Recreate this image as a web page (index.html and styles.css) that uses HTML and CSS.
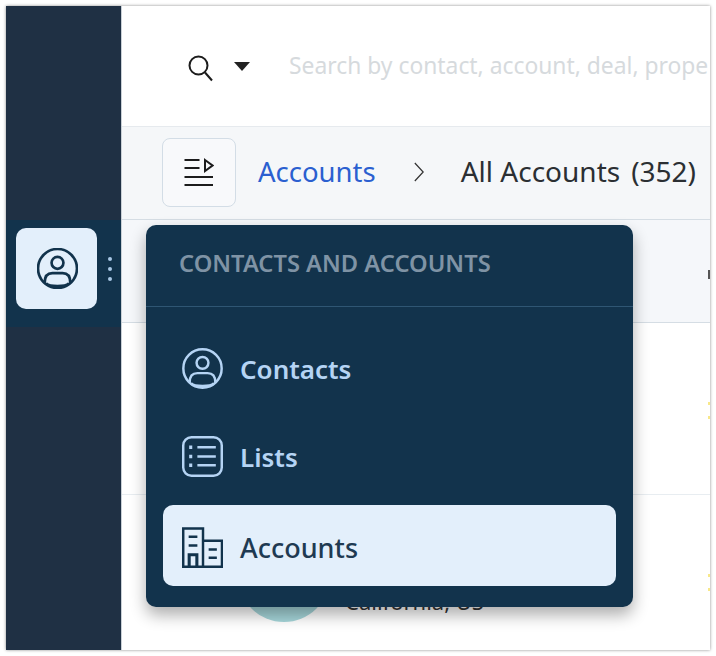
FILE: index.html
```html
<!DOCTYPE html>
<html lang="en">
<head>
  <meta charset="UTF-8">
  <title>All Accounts</title>
  <link rel="stylesheet" href="styles.css">
</head>
<body>
  <div class="frame">
    <!-- Left nav -->
    <aside class="sidebar">
      <div class="nav-active">
        <div class="nav-tile">
          <svg class="nav-icon" viewBox="0 0 40 40" fill="none" stroke="#12334c" stroke-width="2.6">
            <circle cx="20" cy="20" r="19"/>
            <circle cx="20" cy="14.5" r="5.8"/>
            <path d="M7.5 34 C7.5 27 11 24.5 15 24.5 H25 C29 24.5 32.5 27 32.5 34"/>
            <path d="M9 34.5 C12 38 28 38 31 34.5"/>
          </svg>
        </div>
        <div class="nav-dots"><i></i><i></i><i></i></div>
      </div>
    </aside>

    <main class="main">
      <!-- Search -->
      <div class="topbar">
        <svg class="search-icon" viewBox="0 0 26 27" fill="none" stroke="#1c1c1c" stroke-width="2">
          <circle cx="10.5" cy="10.5" r="9"/>
          <path d="M17 17.5 L24 25.5"/>
        </svg>
        <span class="caret"></span>
        <span class="search-text">Search by contact, account, deal, prope</span>
      </div>

      <!-- Breadcrumb -->
      <div class="crumbs">
        <button class="list-toggle">
          <svg viewBox="0 0 30 30" width="30" height="30" fill="none" stroke="#1c1c1c" stroke-width="2">
            <path d="M0.5 3 H15.5 M0.5 11 H15.5 M0.5 20 H29 M0.5 28 H29"/>
            <path d="M21 3 L28.5 8.5 L21 14 Z"/>
          </svg>
        </button>
        <a class="crumb-link">Accounts</a>
        <svg class="crumb-sep" viewBox="0 0 12 22" preserveAspectRatio="none" fill="none" stroke="#333" stroke-width="1.5">
          <path d="M1 1 L11 11 L1 21"/>
        </svg>
        <span class="crumb-current">All Accounts</span>
        <span class="crumb-count">(352)</span>
      </div>

      <!-- Table behind the menu -->
      <div class="table-head"><span class="head-cell"></span></div>
      <div class="table-row row-first"><span class="rating"></span></div>
      <div class="table-row row-second">
        <span class="avatar"></span>
        <span class="place">California, US</span>
        <span class="rating"></span>
      </div>
    </main>

    <!-- Section menu -->
    <div class="menu">
      <div class="menu-title">CONTACTS AND ACCOUNTS</div>
      <ul class="menu-list">
        <li class="menu-item">
          <svg class="menu-icon" viewBox="0 0 40 40" fill="none" stroke="currentColor" stroke-width="2.4">
            <circle cx="20" cy="20" r="18.7"/>
            <circle cx="20" cy="14.5" r="5.8"/>
            <path d="M7.5 33.5 C7.5 27 11 24.5 15 24.5 H25 C29 24.5 32.5 27 32.5 33.5"/>
            <path d="M9 34.5 C12 38 28 38 31 34.5"/>
          </svg>
          Contacts
        </li>
        <li class="menu-item">
          <svg class="menu-icon" viewBox="0 0 40 40" fill="none" stroke="currentColor" stroke-width="2.4">
            <rect x="1.2" y="1.2" width="37.6" height="37.6" rx="8"/>
            <path d="M15 11 H33 M15 20 H33 M15 28.5 H33"/>
            <path d="M7 11 H10 M7 20 H10 M7 28.5 H10" stroke-width="3.4"/>
          </svg>
          Lists
        </li>
        <li class="menu-item is-selected">
          <svg class="menu-icon" viewBox="0 0 40 40" fill="none" stroke="currentColor" stroke-width="2.4">
            <path d="M1.2 39 V1.5 H20.5 V39"/>
            <path d="M20.5 13.5 H39 V39"/>
            <path d="M0 39 H40" stroke-width="3"/>
            <path d="M6.5 9.5 H15 M6.5 18 H15 M26 22 H34 M26 30 H34"/>
            <path d="M7 39 V27 H14.5 V39" stroke-width="3"/>
          </svg>
          Accounts
        </li>
      </ul>
    </div>
  </div>
</body>
</html>
```

FILE: styles.css
```css
/* Page frame */
* {
  box-sizing: border-box;
}
body {
  margin: 0;
  padding: 6px;
  height: 656px;
  background: #fff;
  font-family: "Noto Sans", Arial, sans-serif;
}
.frame {
  position: relative;
  display: flex;
  width: 704px;
  height: 644px;
  overflow: hidden;
  background: #fff;
  box-shadow: 0 0 3px rgba(0,0,0,0.45);
}

/* Sidebar */
.sidebar {
  width: 116px;
  flex: none;
  padding-top: 214px;
  background: #1f3044;
  border-right: 1px solid #c9d0d6;
}
.nav-active {
  display: flex;
  align-items: center;
  gap: 11px;
  height: 107px;
  padding: 0 0 10px 10px;
  background: #12334c;
}
.nav-tile {
  display: flex;
  align-items: center;
  justify-content: center;
  width: 81px;
  height: 81px;
  padding-left: 1px;
  border-radius: 10px;
  background: #e3effb;
}
.nav-icon {
  width: 41px;
  height: 41px;
}
.nav-dots {
  display: flex;
  flex-direction: column;
  gap: 6px;
}
.nav-dots i {
  display: block;
  width: 4px;
  height: 4px;
  border-radius: 50%;
  background: #a9c8e6;
}

/* Main column */
.main {
  flex: 1;
  min-width: 0;
}
.topbar {
  display: flex;
  align-items: center;
  height: 120px;
  padding-left: 66px;
  white-space: nowrap;
}
.search-icon {
  width: 26px;
  height: 27px;
  margin-top: 4px;
  flex: none;
}
.caret {
  width: 0;
  height: 0;
  margin: 1px 39px 0 20px;
  flex: none;
  border-left: 8.5px solid transparent;
  border-right: 8.5px solid transparent;
  border-top: 9px solid #222;
}
.search-text {
  margin-bottom: 2px;
  font-size: 22.85px;
  color: #d6dadd;
}
.crumbs {
  display: flex;
  align-items: center;
  height: 94px;
  padding: 0 0 2px 40px;
  background: #f5f7f9;
  border-top: 1px solid #e6eaee;
  border-bottom: 1px solid #d5dde4;
  white-space: nowrap;
}
.list-toggle {
  display: flex;
  align-items: center;
  justify-content: center;
  width: 74px;
  height: 69px;
  margin-right: 22px;
  padding: 0;
  background: #f8f9fb;
  border: 1px solid #d3dde6;
  border-radius: 8px;
}
.crumb-link {
  margin-bottom: 2px;
  font-size: 27.5px;
  color: #2b5fd0;
}
.crumb-sep {
  width: 10px;
  height: 20px;
  margin: 0 37px 0 38px;
}
.crumb-current,
.crumb-count {
  margin-bottom: 2px;
  font-size: 28px;
  color: #2b2f33;
}
.crumb-count {
  margin-left: 11px;
}
.table-head {
  display: flex;
  justify-content: flex-end;
  height: 103px;
  padding-top: 50px;
  background: #f5f7fa;
  border-bottom: 1px solid #d5dde4;
}
.head-cell {
  width: 2px;
  height: 9px;
  background: #555;
}
.table-row {
  position: relative;
  display: flex;
  height: 172px;
  border-bottom: 1px solid #e8edf1;
}
.row-second {
  height: 155px;
  border-bottom: none;
}
.rating {
  width: 2px;
  height: 17px;
  margin: 79px 0 0 auto;
  border-top: 3px solid #f8e88a;
  border-bottom: 3px solid #f8e88a;
}
.avatar {
  width: 92px;
  height: 92px;
  margin: 35px 0 0 116px;
  flex: none;
  border-radius: 50%;
  background: #a6d6da;
}
.place {
  margin: 91px 0 0 15px;
  font-size: 22px;
  color: #333;
}

/* Section menu over the table */
.menu {
  position: absolute;
  left: 140px;
  top: 219px;
  width: 487px;
  height: 382px;
  background: #12334c;
  border-radius: 10px;
  box-shadow: 0 8px 16px rgba(0,0,0,0.32);
}
.menu-title {
  height: 82px;
  padding: 22px 0 0 33px;
  font-size: 23.7px;
  font-weight: 600;
  color: #7f93a5;
  border-bottom: 1px solid #2f5673;
}
.menu-list {
  display: flex;
  flex-direction: column;
  gap: 7px;
  margin: 0;
  padding: 21px 17px 0;
  list-style: none;
}
.menu-item {
  display: flex;
  align-items: center;
  gap: 17px;
  height: 81px;
  padding-left: 19px;
  font-size: 26px;
  font-weight: 600;
  color: #b5d4f4;
  border-radius: 10px;
}
.menu-icon {
  width: 41px;
  height: 41px;
  flex: none;
}
.is-selected {
  margin-top: 1px;
  padding-top: 3px;
  font-size: 27px;
  font-weight: 500;
  color: #1f3a52;
  background: #e3effb;
}
.is-selected .menu-icon {
  color: #12334c;
}
```
